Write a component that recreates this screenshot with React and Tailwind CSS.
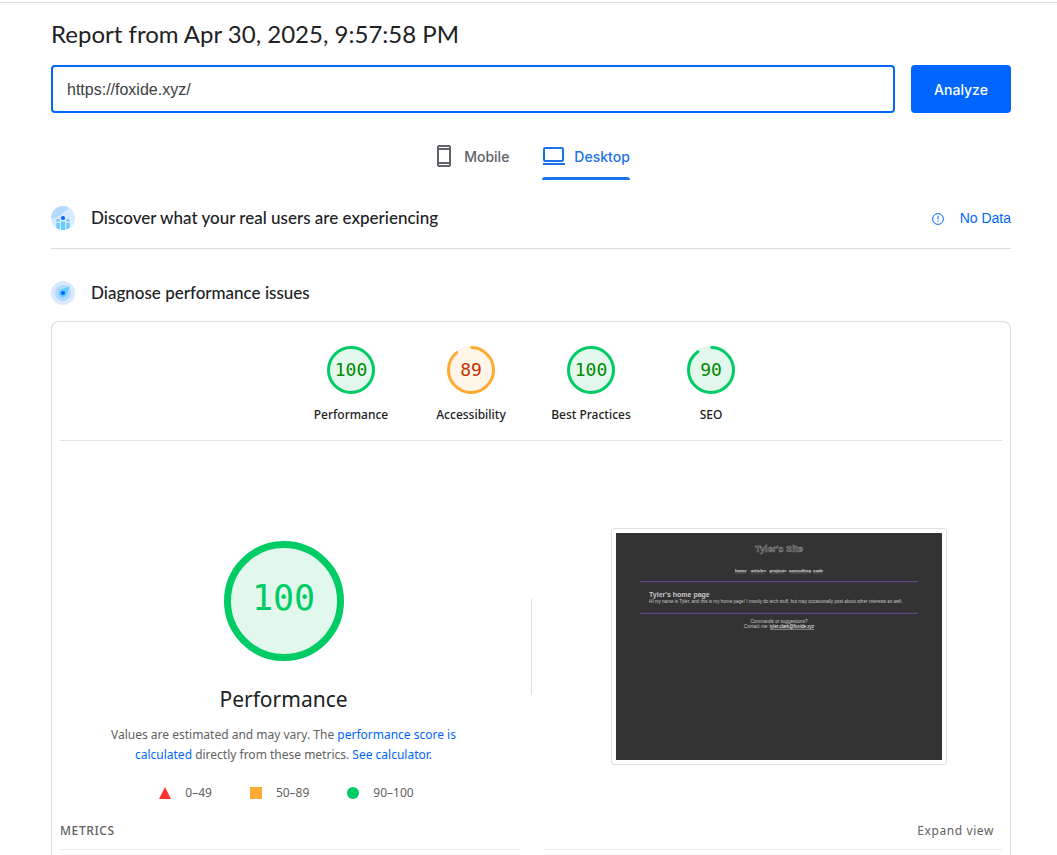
import React, { useState } from "react";

const categories = [
  { label: "Performance", score: 100 },
  { label: "Accessibility", score: 89 },
  { label: "Best Practices", score: 100 },
  { label: "SEO", score: 90 },
];

function ScoreGauge({ label, score }) {
  const good = score >= 90;
  const circumference = 2 * Math.PI * 22.5;
  // the round cap eats into the gap, so the arc ends a little early
  const arc = score === 100 ? circumference : (score / 100) * circumference - 1.5;

  return (
    <a href={`#${label}`} className="flex w-[120px] flex-col items-center gap-[13px]">
      <span className="relative block size-12">
        <svg viewBox="0 0 48 48" className="size-12" aria-hidden="true">
          <circle cx="24" cy="24" r="24" fill={good ? "#e2f8ed" : "#fff5e8"} />
          <circle
            cx="24"
            cy="24"
            r="22.5"
            fill="none"
            stroke={good ? "#00cc66" : "#ffaa33"}
            strokeWidth="3"
            strokeLinecap="round"
            strokeDasharray={`${arc} ${circumference}`}
            transform="rotate(-88 24 24)"
          />
        </svg>
        <span
          className={`absolute inset-0 flex items-center justify-center pb-0.5 font-['DejaVu_Sans_Mono',monospace] text-[18px] ${
            good ? "text-[#008800]" : "text-[#c33300]"
          }`}
        >
          {score}
        </span>
      </span>
      <span className="text-[12px] leading-4 font-medium text-[#212121]">{label}</span>
    </a>
  );
}

// Thumbnail of the tested page, drawn at 1350x940 and scaled down
function SitePreview() {
  return (
    <div className="rounded-[3px] border border-[#e0e0e0] p-1">
      <svg
        viewBox="0 0 1350 940"
        className="h-[227px] w-[326px] bg-[#333333] font-['Liberation_Sans',sans-serif]"
        fill="#c8c8c8"
        fontSize="19"
      >
        <text x="675" y="79" textAnchor="middle" fontSize="38" fontWeight="bold" fill="#333333" stroke="#999999" strokeWidth="2">
          Tyler's Site
        </text>
        <g fontSize="18" fontWeight="bold" fill="#dddddd">
          <text x="493" y="161">home</text>
          <text x="559" y="161">articles</text>
          <text x="636" y="161">projects</text>
          <text x="716" y="161">consulting</text>
          <text x="816" y="161">code</text>
        </g>
        <path d="M493 165h45M559 165h55M636 165h61M716 165h80M816 165h40" stroke="#999999" strokeWidth="2" />
        <path d="M99 201H1250M99 333H1250" stroke="#62468a" strokeWidth="5" />
        <text x="137" y="267" fontSize="29" fontWeight="bold">
          Tyler's home page
        </text>
        <text x="137" y="290">
          Hi my name is Tyler, and this is my home page! I mostly do tech stuff, but may occasionally post about other interests as well.
        </text>
        <text x="675" y="371" textAnchor="middle">
          Commands or suggestions?
        </text>
        <text x="675" y="393" textAnchor="middle">
          Contact me:{" "}
          <tspan textDecoration="underline" fill="#ffffff">
            tyler.clark@foxide.xyz
          </tspan>
        </text>
      </svg>
    </div>
  );
}

export default function App() {
  const [url, setUrl] = useState("https://foxide.xyz/");
  const [device, setDevice] = useState("desktop");

  return (
    <div className="flex min-h-screen flex-col bg-white pt-0.5 font-['Noto_Sans',sans-serif] text-[#212121]">
      <div className="border-t border-[#dadce0]" />
      <main className="flex flex-1 flex-col pt-[15px] pr-[46px] pl-[51px]">
        <h1 className="font-[Lato,sans-serif] text-[24px] leading-8 text-[#202124]">
          Report from Apr 30, 2025, 9:57:58 PM
        </h1>

        {/* URL form */}
        <form className="mt-[15px] flex gap-4" onSubmit={(e) => e.preventDefault()}>
          <input
            type="url"
            aria-label="Enter a web page URL"
            value={url}
            onChange={(e) => setUrl(e.target.value)}
            className="h-12 min-w-0 flex-1 rounded-sm border-2 border-[#0066ff] px-3.5 pt-0.5 font-['Liberation_Sans',sans-serif] text-[16px] text-[#3c4043] outline-none"
          />
          <button
            type="submit"
            className="h-12 w-[100px] rounded-sm bg-[#0066ff] font-[Inter,sans-serif] text-[14px] font-medium text-white"
          >
            Analyze
          </button>
        </form>

        {/* Device tabs */}
        <div className="mt-5 flex items-start justify-center gap-[33px] font-[Inter,sans-serif] text-[14px] font-medium" role="tablist">
          <button
            type="button"
            role="tab"
            aria-selected={device === "mobile"}
            onClick={() => setDevice("mobile")}
            className="flex h-[46px] items-center gap-2 text-[#5f6368]"
          >
            <svg viewBox="0 0 24 24" className="size-6" fill="none" stroke="currentColor" strokeWidth="2" aria-hidden="true">
              <rect x="6" y="2" width="12" height="20" rx="1" />
              <path d="M6 5h12M6 19h12" />
            </svg>
            Mobile
          </button>
          <button
            type="button"
            role="tab"
            aria-selected={device === "desktop"}
            onClick={() => setDevice("desktop")}
            className="flex flex-col text-[#1a73e8]"
          >
            <span className="flex h-11 items-center gap-2 pt-0.5">
              <svg viewBox="0 0 24 24" className="size-6" fill="none" stroke="currentColor" strokeWidth="2" aria-hidden="true">
                <rect x="2" y="4" width="19" height="13" rx="1" />
                <path d="M1 20h22" />
              </svg>
              Desktop
            </span>
            <span className="h-[3px] w-full rounded-t-[3px] bg-[#1a73e8]" />
          </button>
        </div>

        {/* Field data */}
        <section className="flex items-center border-b border-[#dadce0] pt-[26px] pb-[18px]">
          <svg viewBox="0 0 24 24" className="size-6" aria-hidden="true">
            <circle cx="12" cy="12" r="12" fill="#d9eaff" />
            <path d="M0 12A12 12 0 0 1 17 1.100c0 2.400-1.200 3.400-3 3.900-2 .5-2.200 1.500-3 3S8.500 9.500 7 10c-1 .6-.8 2-2.500 2.200S1.500 12.500 0 12Z" fill="#b3d9ff" />
            <path d="M5.300 17h3.400v6.500a12 12 0 0 1-3.400-1.700ZM10 15.500h4V24h-4ZM15.300 17h3.400v4.800a12 12 0 0 1-3.400 1.700Z" fill="#66ccff" />
            <circle cx="7" cy="14.300" r="1.600" fill="#66ccff" />
            <circle cx="17" cy="14.300" r="1.600" fill="#66ccff" />
            <circle cx="12" cy="12" r="2.100" fill="#0066ff" />
          </svg>
          <h2 className="ml-4 font-[Lato,sans-serif] text-[17px] leading-6 font-medium text-[#202124]">
            Discover what your real users are experiencing
          </h2>
          <a href="#no-data" className="ml-auto flex items-center gap-4 font-['Liberation_Sans',sans-serif] text-[14px] leading-6 text-[#0066ff]">
            <svg viewBox="0 0 12 12" className="mt-0.5 size-3" fill="none" stroke="currentColor" aria-hidden="true">
              <circle cx="6" cy="6" r="5.400" />
              <path d="M6 3v3.500M6 7.500v1.300" />
            </svg>
            No Data
          </a>
        </section>

        {/* Lab data */}
        <div className="mt-8 flex items-center">
          <svg viewBox="0 0 24 24" className="size-6" aria-hidden="true">
            <circle cx="12" cy="12" r="12" fill="#d9eaff" />
            <circle cx="12" cy="12" r="8" fill="#b3d9ff" />
            <path d="M19 5 15.800 13.500a4.200 4.200 0 1 1-5.300-5.300Z" fill="#66ccff" />
            <circle cx="12" cy="12" r="2.100" fill="#0066ff" />
          </svg>
          <h2 className="ml-4 font-[Lato,sans-serif] text-[17px] leading-6 font-medium text-[#202124]">
            Diagnose performance issues
          </h2>
        </div>

        <section className="mt-4 flex-1 rounded-t-lg border border-b-0 border-[#dadce0] px-2">
          <div className="flex justify-center border-b border-[#e0e0e0] pt-6 pb-[17px]">
            {categories.map((category) => (
              <ScoreGauge key={category.label} label={category.label} score={category.score} />
            ))}
          </div>

          <div className="flex items-start pt-[87px]">
            <div className="flex flex-1 flex-col items-center">
              <div className="relative mt-[13px] size-[120px]">
                <svg viewBox="0 0 120 120" className="size-[120px]" aria-hidden="true">
                  <circle cx="60" cy="60" r="56.500" fill="#e2f8ed" stroke="#00cc66" strokeWidth="7" />
                </svg>
                <span className="absolute inset-0 flex items-center justify-center pb-1.5 font-['DejaVu_Sans_Mono',monospace] text-[35px] leading-none text-[#00cc66]">
                  100
                </span>
              </div>
              <h2 className="mt-5 text-[21px] leading-9">Performance</h2>
              <p className="mt-2 w-[360px] text-center text-[12px] leading-5 text-[#616161]">
                Values are estimated and may vary. The{" "}
                <a href="#score" className="text-[#0066ff]">
                  performance score is calculated
                </a>{" "}
                directly from these metrics.{" "}
                <a href="#calculator" className="text-[#0066ff]">
                  See calculator.
                </a>
              </p>
              <div className="mt-[18px] flex gap-[38px] pl-1.5 text-[12px] leading-5 text-[#616161]">
                <span className="flex items-center gap-3.5">
                  <svg viewBox="0 0 12 12" className="size-3" aria-hidden="true">
                    <path d="M6 0 12 12H0Z" fill="#ff3333" />
                  </svg>
                  0–49
                </span>
                <span className="flex items-center gap-3.5">
                  <span className="size-3 bg-[#ffaa33]" />
                  50–89
                </span>
                <span className="flex items-center gap-3.5">
                  <span className="size-3 rounded-full bg-[#00cc66]" />
                  90–100
                </span>
              </div>
            </div>
            <div className="flex h-[237px] w-12 items-center justify-center">
              <div className="h-24 w-px bg-[#e0e0e0]" />
            </div>
            <div className="flex flex-1 justify-center">
              <SitePreview />
            </div>
          </div>

          <div className="mt-[18px] flex items-center justify-between text-[12px] leading-5 text-[#616161]">
            <h3 className="font-medium tracking-wider">METRICS</h3>
            <button type="button" className="px-2 tracking-wider">
              Expand view
            </button>
          </div>
          <div className="mt-2 grid grid-cols-2 gap-6">
            <div className="border-t border-[#ebebeb]" />
            <div className="border-t border-[#ebebeb]" />
          </div>
        </section>
      </main>
    </div>
  );
}
